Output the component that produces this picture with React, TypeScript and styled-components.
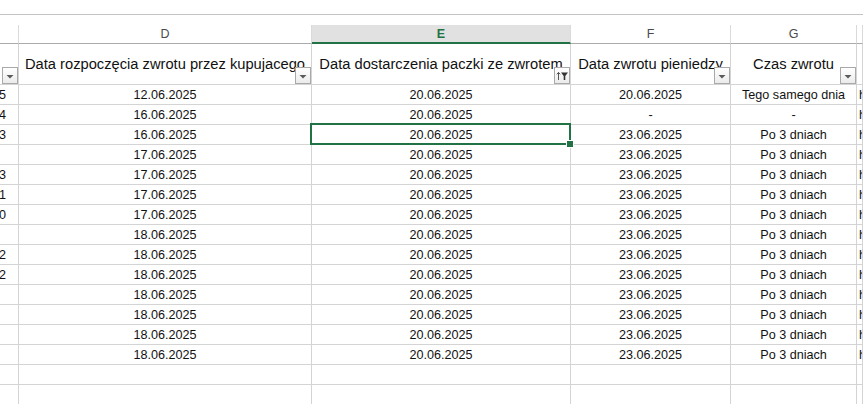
import styled, { createGlobalStyle, css } from "styled-components";

const GlobalStyle = createGlobalStyle`
  html, body {
    margin: 0;
    padding: 0;
    background: #ffffff;
    overflow: hidden;
  }
`;

const COLUMNS = "19px 293px 259px 160px 126px 1fr";
const GRID = "#d4d4d4";
const GREEN = "#217346";

type Row = {
  c: string;
  d: string;
  e: string;
  f: string;
  g: string;
};

const rows: Row[] = [
  { c: "1235", d: "12.06.2025", e: "20.06.2025", f: "20.06.2025", g: "Tego samego dnia" },
  { c: "1234", d: "16.06.2025", e: "20.06.2025", f: "-", g: "-" },
  { c: "1233", d: "16.06.2025", e: "20.06.2025", f: "23.06.2025", g: "Po 3 dniach" },
  { c: "", d: "17.06.2025", e: "20.06.2025", f: "23.06.2025", g: "Po 3 dniach" },
  { c: "1233", d: "17.06.2025", e: "20.06.2025", f: "23.06.2025", g: "Po 3 dniach" },
  { c: "1231", d: "17.06.2025", e: "20.06.2025", f: "23.06.2025", g: "Po 3 dniach" },
  { c: "1230", d: "17.06.2025", e: "20.06.2025", f: "23.06.2025", g: "Po 3 dniach" },
  { c: "", d: "18.06.2025", e: "20.06.2025", f: "23.06.2025", g: "Po 3 dniach" },
  { c: "1232", d: "18.06.2025", e: "20.06.2025", f: "23.06.2025", g: "Po 3 dniach" },
  { c: "1232", d: "18.06.2025", e: "20.06.2025", f: "23.06.2025", g: "Po 3 dniach" },
  { c: "", d: "18.06.2025", e: "20.06.2025", f: "23.06.2025", g: "Po 3 dniach" },
  { c: "", d: "18.06.2025", e: "20.06.2025", f: "23.06.2025", g: "Po 3 dniach" },
  { c: "", d: "18.06.2025", e: "20.06.2025", f: "23.06.2025", g: "Po 3 dniach" },
  { c: "", d: "18.06.2025", e: "20.06.2025", f: "23.06.2025", g: "Po 3 dniach" },
];

function FilterButton({ sorted }: { sorted?: boolean }) {
  return (
    <Filter>
      {sorted ? (
        <svg width="14" height="15" viewBox="0 0 14 15">
          <path d="M3.5 12V4.5M1.8 6.3L3.5 4.4L5.2 6.3" stroke="#555" strokeWidth="1" fill="none" />
          <path d="M6 4.5H13L10.3 8V12H8.7V8Z" fill="#333" />
        </svg>
      ) : (
        <svg width="14" height="15" viewBox="0 0 14 15">
          <path d="M3.5 7H10.5L7 10.5Z" fill="#5a5a5a" />
        </svg>
      )}
    </Filter>
  );
}

export default function App() {
  return (
    <Sheet>
      <GlobalStyle />
      <FormulaEdge />

      <LetterRow>
        <LetterCell />
        <LetterCell>D</LetterCell>
        <LetterCell $active>E</LetterCell>
        <LetterCell>F</LetterCell>
        <LetterCell>G</LetterCell>
        <LetterCell />
      </LetterRow>

      <HeaderRow>
        <HeaderCell>
          <FilterButton />
        </HeaderCell>
        <HeaderCell>
          Data rozpoczęcia zwrotu przez kupujacego
          <FilterButton />
        </HeaderCell>
        <HeaderCell>
          Data dostarczenia paczki ze zwrotem
          <FilterButton sorted />
        </HeaderCell>
        <HeaderCell>
          Data zwrotu pieniedzy
          <FilterButton />
        </HeaderCell>
        <HeaderCell>
          Czas zwrotu
          <FilterButton />
        </HeaderCell>
        <HeaderCell />
      </HeaderRow>

      {rows.map((row, i) => (
        <DataRow key={i}>
          <DataCell $align="end">{row.c}</DataCell>
          <DataCell>{row.d}</DataCell>
          <DataCell $selected={i === 2}>
            {row.e}
            {i === 2 && <FillHandle />}
          </DataCell>
          <DataCell>{row.f}</DataCell>
          <DataCell>{row.g}</DataCell>
          <DataCell $align="start">h</DataCell>
        </DataRow>
      ))}

      {[0, 1].map((i) => (
        <DataRow key={`empty-${i}`}>
          <DataCell />
          <DataCell />
          <DataCell />
          <DataCell />
          <DataCell />
          <DataCell />
        </DataRow>
      ))}
    </Sheet>
  );
}

const Sheet = styled.div`
  width: 863px;
  height: 404px;
  overflow: hidden;

  font-family: "Liberation Sans", Arial, sans-serif;
  color: #111111;

  background-color: #ffffff;
`;

const FormulaEdge = styled.div`
  height: 15px;

  border-bottom: 1px solid #c4c4c4;
  box-sizing: border-box;

  margin-bottom: 10px;
`;

const LetterRow = styled.div`
  display: grid;
  grid-template-columns: ${COLUMNS};
`;

const LetterCell = styled.div<{ $active?: boolean }>`
  height: 19px;
  box-sizing: border-box;

  display: flex;
  align-items: center;
  justify-content: center;

  font-size: 12.5px;
  color: #4a4a4a;

  border-right: 1px solid #dadada;
  border-bottom: 1px solid #ababab;

  ${({ $active }) =>
    $active &&
    css`
      background-color: #e1e1e1;
      color: ${GREEN};
      font-weight: 700;
      border-bottom: 2px solid ${GREEN};
      padding-top: 1px;
    `}
`;

const HeaderRow = styled.div`
  display: grid;
  grid-template-columns: ${COLUMNS};
`;

const HeaderCell = styled.div`
  position: relative;

  height: 41px;
  box-sizing: border-box;

  display: flex;
  align-items: center;
  justify-content: center;

  overflow: hidden;
  white-space: nowrap;

  font-size: 14.7px;
  color: #111111;

  border-right: 1px solid ${GRID};
  border-bottom: 1px solid ${GRID};
`;

const Filter = styled.div`
  position: absolute;
  right: 0;
  bottom: 0;

  width: 16px;
  height: 17px;
  box-sizing: border-box;

  display: flex;
  align-items: center;
  justify-content: center;

  background: linear-gradient(#ffffff, #ebebeb);
  border: 1px solid #a9a9a9;
`;

const DataRow = styled.div`
  display: grid;
  grid-template-columns: ${COLUMNS};
`;

const DataCell = styled.div<{ $align?: "start" | "end"; $selected?: boolean }>`
  position: relative;

  height: 20px;
  box-sizing: border-box;

  display: flex;
  align-items: center;
  justify-content: ${({ $align }) =>
    $align === "end" ? "flex-end" : $align === "start" ? "flex-start" : "center"};

  padding: ${({ $align }) =>
    $align === "end" ? "0 12px 0 0" : $align === "start" ? "0 0 0 2px" : "0"};

  overflow: hidden;
  white-space: nowrap;

  font-size: 12.6px;
  color: #111111;

  border-right: 1px solid ${GRID};
  border-bottom: 1px solid ${GRID};

  ${({ $selected }) =>
    $selected &&
    css`
      overflow: visible;
      z-index: 2;

      &::after {
        content: "";
        position: absolute;
        top: -2px;
        left: -2px;
        right: -1px;
        bottom: -1px;
        border: 2px solid ${GREEN};
        pointer-events: none;
      }
    `}
`;

const FillHandle = styled.span`
  position: absolute;
  right: -3px;
  bottom: -3px;
  z-index: 3;

  width: 6px;
  height: 6px;

  background-color: ${GREEN};
  box-shadow: 0 0 0 1px #ffffff;
`;
